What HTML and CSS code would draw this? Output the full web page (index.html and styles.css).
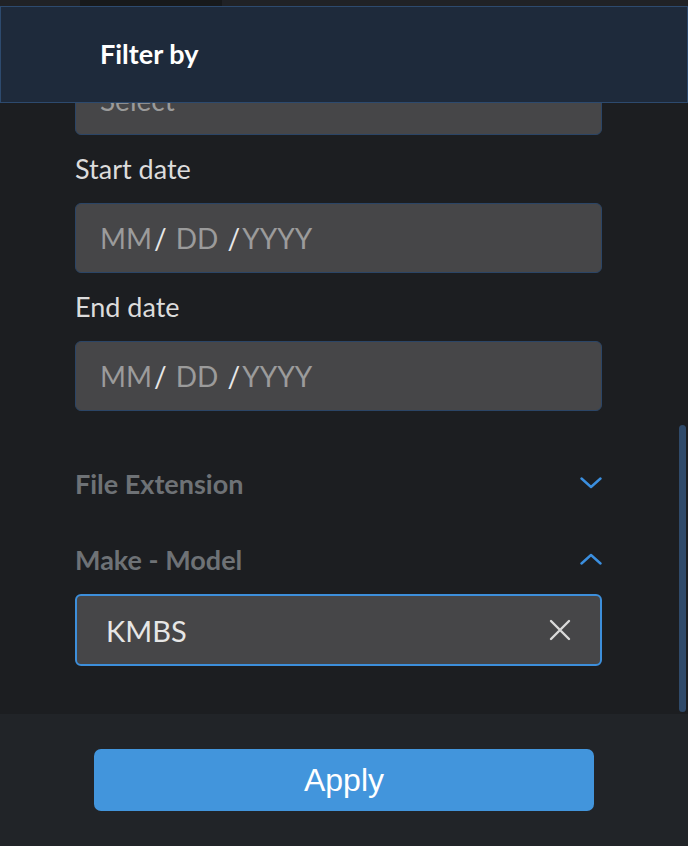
FILE: index.html
```html
<!DOCTYPE html>
<html lang="en">
<head>
  <meta charset="UTF-8">
  <title>Filter by</title>
  <link rel="stylesheet" href="styles.css">
</head>
<body>

<div class="topbar"><div class="tab"></div></div>

<div class="header">
  <h1>Filter by</h1>
</div>

<div class="scroll">
  <div class="content">
    <div class="input select">
      <span class="placeholder">Select</span>
      <span class="caret"></span>
    </div>

    <label class="label">Start date</label>
    <div class="input">
      <span class="placeholder">MM</span><span class="slash">/</span>&nbsp;<span class="placeholder">DD</span>&nbsp;<span class="slash">/</span><span class="placeholder">YYYY</span>
    </div>

    <label class="label">End date</label>
    <div class="input">
      <span class="placeholder">MM</span><span class="slash">/</span>&nbsp;<span class="placeholder">DD</span>&nbsp;<span class="slash">/</span><span class="placeholder">YYYY</span>
    </div>

    <div class="section first">
      <span>File Extension</span>
      <svg class="chevron" width="22" height="12" viewBox="0 0 22 12"><path d="M1.5 1.5 L11 10 L20.5 1.5" fill="none" stroke="#3b8fdf" stroke-width="2.4" stroke-linecap="round" stroke-linejoin="round"/></svg>
    </div>

    <div class="section">
      <span>Make - Model</span>
      <svg class="chevron" width="22" height="12" viewBox="0 0 22 12"><path d="M1.5 10.5 L11 2 L20.5 10.5" fill="none" stroke="#3b8fdf" stroke-width="2.4" stroke-linecap="round" stroke-linejoin="round"/></svg>
    </div>

    <div class="input active">
      <span class="value">KMBS</span>
      <svg class="clear" width="22" height="22" viewBox="0 0 22 22"><path d="M2 2 L20 20 M20 2 L2 20" fill="none" stroke="#dadada" stroke-width="2.4" stroke-linecap="round"/></svg>
    </div>
  </div>
  <div class="scrollbar"></div>
</div>

<div class="footer">
  <button class="apply">Apply</button>
</div>

</body>
</html>
```

FILE: styles.css
```css
body {
  margin: 0;
  background: #1c1e21;
  font-family: "Lato", "Noto Sans", sans-serif;
  width: 688px;
  height: 846px;
  overflow: hidden;
}

.topbar { height: 6px; background: #202226; }
.topbar .tab { margin-left: 80px; width: 142px; height: 6px; background: #17191b; }

.header {
  position: relative;
  z-index: 2;
  height: 95px;
  background: #1e2a3b;
  border: 1px solid #2d4a6e;
  display: flex;
  align-items: center;
}
.header h1 {
  margin: -2px 0 0 99px;
  color: #fff;
  font-size: 27px;
  font-weight: 700;
}

.scroll {
  position: relative;
  height: 611px;
  overflow: hidden;
}
.content {
  margin: -38px 0 0 75px;
  width: 527px;
}

.input {
  box-sizing: border-box;
  height: 70px;
  background: #464648;
  border: 1px solid #2b4566;
  border-radius: 6px;
  display: flex;
  align-items: center;
  padding-left: 24px;
  font-size: 28px;
  color: #9b9b9b;
}
.input .slash { color: #e8e8e8; padding: 0 2px; }
.select { position: relative; }
.select .caret {
  position: absolute;
  right: 38px;
  bottom: 32px;
  width: 0;
  height: 0;
  border-left: 5px solid transparent;
  border-right: 5px solid transparent;
  border-top: 5px solid #3b8fdf;
}

.label {
  display: block;
  height: 68px;
  line-height: 68px;
  font-size: 27px;
  color: #dcdcdc;
}

.section {
  height: 48px;
  margin-top: 28px;
  display: flex;
  align-items: center;
  justify-content: space-between;
  font-size: 27px;
  font-weight: 700;
  color: #6e7276;
}
.section.first { margin-top: 48px; }

.input.active {
  height: 72px;
  margin-top: 11px;
  border: 2px solid #3d8fdb;
  padding: 0 29px 0 29px;
  justify-content: space-between;
}
.input .value { color: #e6e6e6; font-size: 29px; }

.scrollbar {
  position: absolute;
  right: 2px;
  top: 322px;
  width: 7px;
  height: 287px;
  border-radius: 4px;
  background: #2f4a6a;
}

.footer {
  height: 132px;
  background: #212428;
  padding-top: 35px;
  box-sizing: border-box;
}
.apply {
  display: block;
  margin-left: 94px;
  width: 500px;
  height: 62px;
  border: none;
  border-radius: 7px;
  background: #4295dc;
  color: #fff;
  font-family: "Liberation Sans", Arial, sans-serif;
  font-size: 32px;
  cursor: pointer;
}
```
